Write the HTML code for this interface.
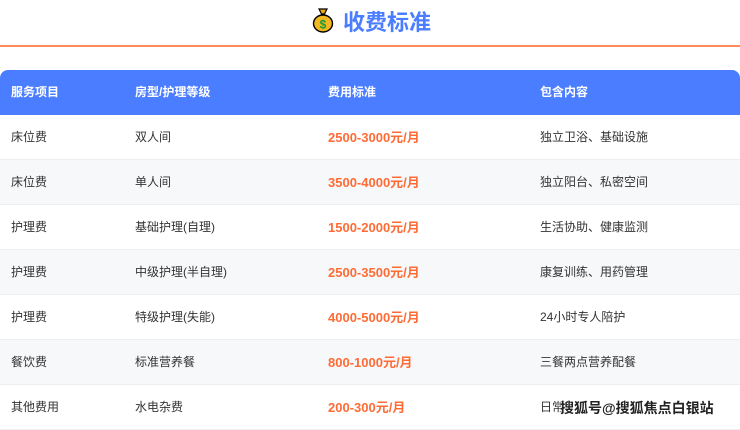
<!DOCTYPE html><html><head><meta charset="utf-8"><style>
body{margin:0;width:740px;height:425px;overflow:hidden;background:#fff;font-family:"Liberation Sans","Noto Sans CJK SC",sans-serif;}
.title{position:absolute;left:343px;top:5px;font-size:22px;font-weight:bold;color:#4a7dff;}
.bag{position:absolute;left:312px;top:7px;width:22px;height:26px;}
.line{position:absolute;left:0;top:45px;width:740px;height:2px;background:#ff8a5c;}
.tb{position:absolute;left:0;top:70px;width:740px;}
.row{height:45px;position:relative;font-size:12px;color:#333;border-bottom:1px solid #eceef2;box-sizing:border-box;}
.row span{position:absolute;top:0;line-height:45px;}
.h{background:#4a7dff;color:#fff;font-weight:bold;border-radius:8px 8px 0 0;border:none;}
.g{background:#f7f8fa;}
.c1{left:11px}.c2{left:135px}.c3{left:328px}.c4{left:540px}
.p{color:#ff6b35;font-weight:bold;font-size:13px;}
.wm{position:absolute;left:560px;top:398px;font-size:14px;font-weight:bold;color:#222;text-shadow:0 0 2px #fff,0 0 2px #fff;}
</style></head><body>
<svg class="bag" viewBox="0 0 22 26"><path d="M7 2h8l-2.5 5h-3z" fill="#e6a817" stroke="#000" stroke-width="1.2"/><ellipse cx="11" cy="16.5" rx="9.5" ry="8.5" fill="#f2b81f" stroke="#000" stroke-width="1.4"/><text x="11" y="21.5" font-size="12" font-weight="bold" fill="#1a9b3c" text-anchor="middle" font-family="Liberation Sans">$</text></svg>
<div class="title">收费标准</div>
<div class="line"></div>
<div class="tb">
<div class="row h"><span class="c1">服务项目</span><span class="c2">房型/护理等级</span><span class="c3">费用标准</span><span class="c4">包含内容</span></div>
<div class="row"><span class="c1">床位费</span><span class="c2">双人间</span><span class="c3 p">2500-3000元/月</span><span class="c4">独立卫浴、基础设施</span></div>
<div class="row g"><span class="c1">床位费</span><span class="c2">单人间</span><span class="c3 p">3500-4000元/月</span><span class="c4">独立阳台、私密空间</span></div>
<div class="row"><span class="c1">护理费</span><span class="c2">基础护理(自理)</span><span class="c3 p">1500-2000元/月</span><span class="c4">生活协助、健康监测</span></div>
<div class="row g"><span class="c1">护理费</span><span class="c2">中级护理(半自理)</span><span class="c3 p">2500-3500元/月</span><span class="c4">康复训练、用药管理</span></div>
<div class="row"><span class="c1">护理费</span><span class="c2">特级护理(失能)</span><span class="c3 p">4000-5000元/月</span><span class="c4">24小时专人陪护</span></div>
<div class="row g"><span class="c1">餐饮费</span><span class="c2">标准营养餐</span><span class="c3 p">800-1000元/月</span><span class="c4">三餐两点营养配餐</span></div>
<div class="row"><span class="c1">其他费用</span><span class="c2">水电杂费</span><span class="c3 p">200-300元/月</span><span class="c4">日常</span></div>
</div>
<div class="wm">搜狐号@搜狐焦点白银站</div>
</body></html>
